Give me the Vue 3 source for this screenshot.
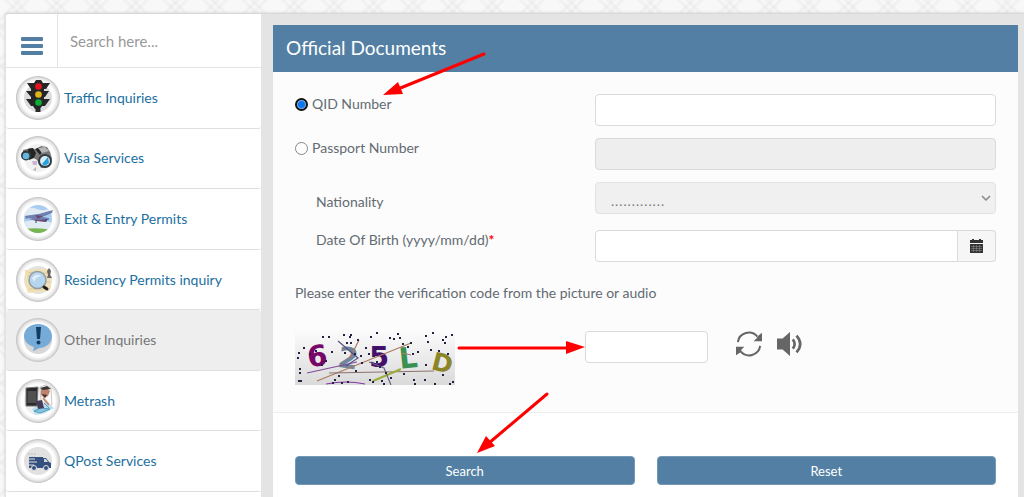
<script setup>
import { ref } from 'vue'

const items = [
  { icon: 'traffic', label: 'Traffic Inquiries' },
  { icon: 'visa', label: 'Visa Services' },
  { icon: 'plane', label: 'Exit & Entry Permits' },
  { icon: 'residency', label: 'Residency Permits inquiry' },
  { icon: 'other', label: 'Other Inquiries' },
  { icon: 'metrash', label: 'Metrash' },
  { icon: 'qpost', label: 'QPost Services' },
]

const active = ref('other')
const query = ref('')
const docType = ref('qid')
const qid = ref('')
const passport = ref('')
const birth = ref('')
const code = ref('')

// noise dots of the verification picture
const dots = [
  [27, 5], [33, 5], [48, 3], [54, 5], [55, 3], [75, 5], [81, 1], [94, 6], [102, 2], [98, 7], [104, 6], [130, 4], [137, 1],
  [150, 5], [156, 3], [8, 16], [3, 21], [2, 26], [14, 22], [20, 19], [4, 37], [4, 41], [3, 49], [5, 49], [26, 33], [30, 29],
  [36, 20], [39, 48], [37, 51], [43, 44], [46, 51], [49, 21], [52, 50], [51, 11], [55, 11], [62, 8], [59, 22], [65, 24],
  [66, 31], [60, 39], [70, 16], [73, 22], [74, 48], [77, 50], [80, 17], [81, 30], [84, 35], [86, 49], [90, 41], [95, 46],
  [78, 24], [107, 12], [112, 15], [115, 11], [117, 22], [122, 20], [118, 48], [119, 52], [129, 48], [130, 33], [132, 10],
  [135, 18], [139, 52], [143, 19], [147, 43], [149, 11], [152, 22], [154, 52], [157, 50], [147, 8], [108, 42], [88, 52],
]

function reset() {
  qid.value = ''
  passport.value = ''
  birth.value = ''
  code.value = ''
}
</script>

<template>
  <div class="page">
    <div class="shell">
      <aside class="sidebar">
        <div class="search">
          <button class="burger" type="button" aria-label="Menu">
            <span></span><span></span><span></span>
          </button>
          <input v-model="query" class="search-box" type="text" placeholder="Search here..." aria-label="Search here">
        </div>
        <nav class="menu">
          <a v-for="item in items" :key="item.icon" href="#" class="item" :class="{ active: active === item.icon }" @click.prevent="active = item.icon">
            <span class="badge">
              <svg v-if="item.icon === 'traffic'" viewBox="0 0 44 44">
                <circle cx="22" cy="22" r="14" fill="#dcdcdc" />
                <path d="M19.5 33h5v3h-5z" fill="#292929" />
                <path d="M11 7h7l2-3h5l2 3h7l-4 6h-2v2h5l-4 6h-1v2h6l-5 7h-3l-2 3h-5l-2-3h-2l-5-7h5v-2l-5-6h5v-2z" fill="#262626" />
                <circle cx="22.500" cy="10.500" r="3.300" fill="#e8141d" />
                <circle cx="22.500" cy="18.500" r="3.300" fill="#e2b319" />
                <circle cx="22.500" cy="26.500" r="3.300" fill="#0bad35" />
              </svg>
              <svg v-else-if="item.icon === 'visa'" viewBox="0 0 44 44">
                <circle cx="22" cy="22" r="14" fill="#f1f1f1" />
                <path d="M7 14l8-2 6 2 4-4 6 1 3 5 2 7-3 8-8 1-4-8-5-3-4 2-5-2z" fill="#777" />
                <path d="M12 13l5-1 3 5-2 5-5 2zM19 13l5-2 3 3-3 5z" fill="#242424" />
                <path d="M22 12l7-1 4 4-7 2z" fill="#b6b6b6" />
                <circle cx="10" cy="19.500" r="5" fill="#303b41" />
                <circle cx="10" cy="20" r="3.300" fill="#63b7df" />
                <circle cx="29" cy="25" r="7" fill="#333c40" />
                <circle cx="29" cy="25" r="5" fill="#d9edf4" />
                <path d="M26 28l6-7 1 6-4 3z" fill="#269fdd" />
                <path d="M16 25h5v4h-4z" fill="#ceb5d1" />
                <path d="M17 34l3-3v4z" fill="#b7b7b7" />
              </svg>
              <svg v-else-if="item.icon === 'plane'" viewBox="0 0 44 44">
                <clipPath id="sky"><circle cx="22" cy="22" r="14" /></clipPath>
                <g clip-path="url(#sky)">
                  <path d="M7 7h30v30H7z" fill="#a9cdf0" />
                  <path d="M7 13q7-4 14-1t16-2v5l-14 2-16 2zM7 25l15-3 15 4v8H7z" fill="#e1ebf3" />
                  <path d="M7 32q15-2 30 1v6H7z" fill="#78b451" />
                </g>
                <path d="M9 19l14-2 14-4-1 3-10 4 7 1v2l-10 1-10-3-3 1z" fill="#6d80b0" />
                <path d="M19 18l8 1-5 3zM12 22l12 1 8-1-3 3-8-1z" fill="#6e4972" />
                <path d="M20 23v3M30 22v3" stroke="#353e68" />
              </svg>
              <svg v-else-if="item.icon === 'residency'" viewBox="0 0 44 44">
                <circle cx="22" cy="22" r="14" fill="#e2e2e2" />
                <path d="M9 12l13-1 13 0 0 19-2 3-21 2-3-8z" fill="#f0e0b5" />
                <path d="M12 15l7-1M11 18h6M27 15h6M29 19h5M29 24h5M13 31h16" stroke="#d9ca9c" />
                <path d="M31 13l2-3 2 3-1 4 2 3h-5l1-3z" fill="#666" />
                <circle cx="21.500" cy="22" r="8.500" fill="#b6d5ef" stroke="#929ca5" stroke-width="1.500" />
                <path d="M16 20q4-6 10-2-6 0-8 6z" fill="#e1effa" />
                <path d="M28 29l3 2" stroke="#202020" stroke-width="3" stroke-linecap="round" />
              </svg>
              <svg v-else-if="item.icon === 'other'" viewBox="0 0 44 44">
                <circle cx="22" cy="22" r="14" fill="#d7d7d7" />
                <path d="M22 6c8 0 14 5 14 12s-5 11-12 12c-2 0-5 3-7 3l1-4C12 27 8 23 8 18 8 11 14 6 22 6z" fill="#76abd8" />
                <path d="M20 9h5l-1 12h-3z" fill="#123d62" />
                <circle cx="22.500" cy="24.500" r="2" fill="#123d62" />
              </svg>
              <svg v-else-if="item.icon === 'metrash'" viewBox="0 0 44 44">
                <circle cx="22" cy="22" r="14" fill="#eee" />
                <path d="M24 8l6-2 5 3 1 17-5 3-6-8z" fill="#fafafa" stroke="#999" stroke-width=".500" />
                <path d="M25 10l6-1 3 3-2 5-4 2-3-3z" fill="#bd836e" />
                <path d="M24 9l7-2 4 3-8 1zM26 15l5 1-2 3z" fill="#3c3334" />
                <path d="M16 30l13-7 9 6-9 5-10 2z" fill="#b7dfef" />
                <path d="M18 32l7-3 9 1-10 4zM28 24l5 5" stroke="#589ab9" fill="#87c4df" />
                <path d="M10 9l12-1-1 19H10z" fill="#292929" stroke="#777" />
                <path d="M11.500 12h9v12h-9z" fill="#505050" />
                <path d="M20 22l6-1 2 8-6 1z" fill="#473c58" />
                <path d="M27 19l6 7" stroke="#c5927d" stroke-width="2" />
              </svg>
              <svg v-else viewBox="0 0 44 44">
                <circle cx="22" cy="22" r="14" fill="#e1e1e1" />
                <path d="M12 15h9M15 18h4" stroke="#bbb" stroke-dasharray="2 1" />
                <path d="M13 18h14v11H13zM26 19h4l3 4 2 1v5h-9z" fill="#34507f" />
                <path d="M28 20h2l2 3h-4z" fill="#cbd3df" />
                <path d="M13 20h6M13 23h8M13 26h5" stroke="#e1e1e1" stroke-width="1" />
                <circle cx="18" cy="29" r="2.500" fill="#34507f" stroke="#e1e1e1" />
                <circle cx="30" cy="29" r="2.500" fill="#34507f" stroke="#e1e1e1" />
              </svg>
            </span>
            {{ item.label }}
          </a>
        </nav>
      </aside>

      <main class="content">
        <form class="panel" @submit.prevent>
          <h1>Official Documents</h1>
          <div class="body">
            <div class="row">
              <label class="choice"><input v-model="docType" type="radio" name="doc" value="qid">QID Number</label>
              <input v-model="qid" class="field" type="text" aria-label="QID Number">
            </div>
            <div class="row">
              <label class="choice"><input v-model="docType" type="radio" name="doc" value="passport">Passport Number</label>
              <input v-model="passport" class="field" type="text" aria-label="Passport Number" :disabled="docType === 'qid'">
            </div>
            <div class="row nation">
              <label class="sub" for="nation">Nationality</label>
              <div class="select-wrap">
                <select id="nation" class="field" :disabled="docType === 'qid'">
                  <option>.............</option>
                </select>
                <svg class="chevron" viewBox="0 0 10 6"><path d="M1 1l4 4 4-4" fill="none" stroke="#888" stroke-width="1.500" /></svg>
              </div>
            </div>
            <div class="row">
              <label class="sub" for="birth">Date Of Birth (yyyy/mm/dd)<b>*</b></label>
              <div class="date">
                <input id="birth" v-model="birth" class="field" type="text">
                <button type="button" aria-label="Choose date">
                  <svg viewBox="0 0 13 14">
                    <path d="M0 1h2V0h2v1h5V0h2v1h2v3H0zM0 5h13v9H0z" fill="#333" />
                    <path d="M1 7.500h11M1 9.500h11M1 11.500h11M3.500 6v7M6.500 6v7M9.500 6v7" stroke="#888" stroke-width=".600" />
                  </svg>
                </button>
              </div>
            </div>

            <label class="hint" for="code">Please enter the verification code from the picture or audio</label>
            <div class="verify">
              <svg class="captcha" viewBox="0 0 160 54" role="img" aria-label="Verification code">
                <defs>
                  <linearGradient id="fade" x2="0" y2="1">
                    <stop offset="0" stop-color="#fbfbfb" />
                    <stop offset="1" stop-color="#dadada" />
                  </linearGradient>
                </defs>
                <path d="M0 0h160v54H0z" fill="url(#fade)" />
                <g class="glyphs">
                  <text x="12" y="35" fill="#780568" transform="rotate(-6 22 24)">6</text>
                  <text x="43" y="37" fill="#71869b" transform="rotate(8 52 27)">2</text>
                  <text x="74" y="36" fill="#44106c">5</text>
                  <text x="104" y="37" fill="#399052" transform="rotate(-6 112 28)">L</text>
                  <text class="last" x="137" y="41" fill="#8b8528" transform="rotate(14 148 32)">D</text>
                </g>
                <g fill="none" stroke-width="1.200">
                  <path d="M22 50L116 12M55 27l9-18M107 22l9 2" stroke="#ad7960" />
                  <path d="M12 42l50-11" stroke="#804b9b" />
                  <path d="M34 42l105-2" stroke="#8b7270" />
                  <path d="M43 10l20 17-12 8" stroke="#595086" />
                  <path d="M78 50l28-12" stroke="#9dae38" stroke-width="2" />
                  <path d="M74 31l15 6 7 17" stroke="#6d647d" />
                  <path d="M31 53q20-4 39 0" stroke="#8737a4" />
                </g>
                <rect v-for="(d, i) in dots" :key="i" :x="d[0]" :y="d[1]" width="2" height="2" fill="#252145" />
              </svg>
              <input id="code" v-model="code" class="field code" type="text">
              <button class="tool" type="button" aria-label="New picture">
                <svg viewBox="0 0 28 28">
                  <path d="M2 12A12 12 0 0 1 23 6M26 16A12 12 0 0 1 5 22" fill="none" stroke="#666" stroke-width="2.200" />
                  <path d="M28 2v9h-9l3-3 2-3zM0 26v-9h9l-3 3-1 3z" fill="#666" />
                </svg>
              </button>
              <button class="tool" type="button" aria-label="Play audio">
                <svg viewBox="0 0 28 28">
                  <path d="M0 8h6L14 1v26l-8-7H0z" fill="#666" />
                  <path d="M17 9q4 5 0 10M21 5q8 9 0 18" fill="none" stroke="#666" stroke-width="2.800" />
                </svg>
              </button>
            </div>
          </div>
          <div class="actions">
            <button type="submit">Search</button>
            <button type="button" @click="reset">Reset</button>
          </div>
        </form>
      </main>
    </div>

    <svg class="arrows" width="1024" height="497" viewBox="0 0 1024 497" aria-hidden="true">
      <g stroke="#f00" stroke-width="3" stroke-linecap="round">
        <path d="M484 54L398 89M459 348h110M547 394l-58 49" />
      </g>
      <g fill="#f00">
        <path d="M383 95l15-13 5 12zM585 347l-19-6v13zM477 453l9-17 9 10z" />
      </g>
    </svg>
  </div>
</template>

<style>
body {
  margin: 0;
}
</style>

<style scoped>
* {
  box-sizing: border-box;
}

.page {
  position: relative;
  min-height: 100vh;
  display: flex;
  padding: 13px 0 0 5px;
  overflow: hidden;
  font: 14px/20px Lato, sans-serif;
  color: #636b72;
  background:
    repeating-linear-gradient(45deg, transparent 0 17px, #e4e4e460 19px 20px, transparent 22px 23px, #e4e4e460 25px 26px, transparent 28px),
    repeating-linear-gradient(-45deg, transparent 0 17px, #e4e4e460 19px 20px, transparent 22px 23px, #e4e4e460 25px 26px, transparent 28px),
    #f8f8f8;
}

button,
input,
select {
  font: inherit;
  color: inherit;
}

button {
  cursor: pointer;
}

.shell {
  flex: 1;
  display: flex;
  background: #e4e4e4;
  border-top: 1px solid #d8d8d8;
  border-radius: 3px 0 0 0;
  box-shadow: 0 0 3px #ccc;
}

.sidebar {
  flex: 0 0 256px;
  min-width: 0;
  display: flex;
  flex-direction: column;
  background: #fff;
  border-left: 1px solid #e2e2e2;
  border-radius: 3px 0 0 0;
}

.search {
  display: flex;
  height: 54px;
  border-bottom: 1px solid #e4e4e4;
}

.burger {
  width: 52px;
  display: flex;
  flex-direction: column;
  align-items: center;
  justify-content: center;
  gap: 3px;
  padding: 10px 0 0;
  border: 0;
  border-right: 1px solid #e4e4e4;
  background: none;
}

.burger span {
  width: 22px;
  height: 4px;
  border-radius: 1px;
  background: #527fa3;
}

.search-box {
  flex: 1;
  min-width: 0;
  padding: 0 12px;
  border: 0;
  outline: 0;
  background: none;
  font-size: 15px;
}

.search-box::placeholder {
  color: #999;
}

.menu {
  flex: 1;
  display: flex;
  flex-direction: column;
  padding-bottom: 5px;
}

.item {
  flex: 1;
  display: flex;
  align-items: center;
  gap: 4px;
  padding-left: 10px;
  border-bottom: 1px solid #dedede;
  border-radius: 3px;
  color: #1c6f9f;
  text-decoration: none;
}

.item.active {
  background: #eee;
  color: #777;
}

.badge {
  width: 44px;
  height: 44px;
  border-radius: 50%;
  background: radial-gradient(circle, #fff 0 15px, #fdfdfd 17px, #e2e2e2 20px, #bdbdbd 22px);
}

.badge svg {
  display: block;
}

.content {
  flex: 1;
  display: flex;
  padding: 11px 6px 0 12px;
}

.panel {
  flex: 1;
  background: #fff;
}

h1 {
  margin: 0;
  padding: 11px 13px 12px;
  background: #527fa3;
  color: #fff;
  font-size: 19px;
  font-weight: 400;
  line-height: 24px;
}

.body {
  padding: 22px 22px 27px;
  background: #fcfcfc;
  border-bottom: 1px solid #eee;
}

.row {
  display: grid;
  grid-template-columns: 3fr 4fr;
  align-items: start;
  margin-bottom: 12px;
}

.row.nation {
  margin-bottom: 16px;
}

.choice {
  display: flex;
  align-items: center;
  gap: 4px;
}

.choice input {
  appearance: none;
  width: 13px;
  height: 13px;
  margin: 0;
  border: 1px solid #858585;
  border-radius: 50%;
  background: #fff;
}

.choice input:checked {
  border: 2px solid #111;
  background: radial-gradient(circle, #0b76ef 0 3px, #cfe3fb 5px);
}

.sub {
  padding-left: 21px;
}

.nation .sub {
  padding-top: 10px;
}

.sub b {
  color: #f00;
}

.field {
  display: block;
  width: 100%;
  height: 32px;
  padding: 0 12px;
  border: 1px solid #dadada;
  border-radius: 4px;
  background: #fff;
}

.field:disabled {
  background: #eee;
  opacity: 1;
}

.select-wrap {
  position: relative;
}

select.field {
  appearance: none;
  padding: 6px 14px 0;
  border-color: #e2e2e2;
  color: #777;
  font-family: "Liberation Sans", sans-serif;
  font-size: 15px;
}

select.field:disabled {
  background: #f0f0f0;
}

.chevron {
  position: absolute;
  right: 5px;
  top: 13px;
  width: 10px;
  height: 6px;
  pointer-events: none;
}

.date {
  display: flex;
}

.date .field {
  flex: 1;
  border-radius: 4px 0 0 4px;
}

.date button {
  width: 38px;
  display: grid;
  place-items: center;
  padding: 0;
  border: 1px solid #dadada;
  border-left: 0;
  border-radius: 0 4px 4px 0;
  background: #f6f6f6;
}

.date svg {
  width: 13px;
  height: 14px;
}

.hint {
  display: block;
  padding-top: 9px;
}

.verify {
  display: flex;
  align-items: flex-start;
  padding-top: 28px;
}

.captcha {
  width: 160px;
  height: 54px;
}

.glyphs {
  font: bold 29px "DejaVu Sans", sans-serif;
}

.glyphs .last {
  font-size: 25px;
}

.code {
  width: 123px;
  margin: 0 28px 0 130px;
}

.tool {
  width: 26px;
  height: 26px;
  margin-right: 15px;
  padding: 0;
  border: 0;
  background: none;
}

.tool svg {
  display: block;
}

.actions {
  display: grid;
  grid-template-columns: 1fr 1fr;
  gap: 22px;
  padding: 43px 22px 12px;
}

.actions button {
  height: 29px;
  padding: 0;
  border: 1px solid #7499b6;
  border-radius: 4px;
  background: #527fa3;
  color: #fff;
  font-size: 13px;
}

/* pointers laid over the form */
.arrows {
  position: absolute;
  left: 0;
  top: 0;
  pointer-events: none;
}
</style>
